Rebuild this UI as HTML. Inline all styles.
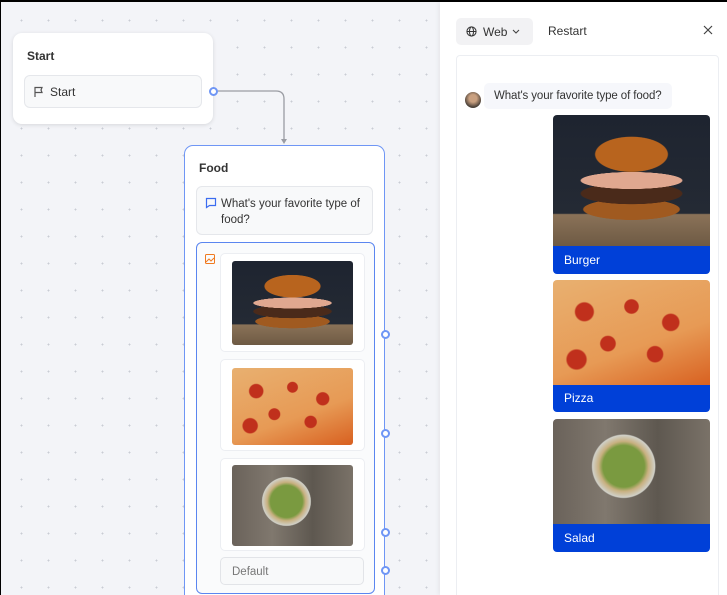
<!DOCTYPE html>
<html><head><style>
*{box-sizing:border-box;margin:0;padding:0}
html,body{width:727px;height:595px;overflow:hidden}
body{position:relative;font-family:"Liberation Sans",sans-serif;background:#f3f4f8;color:#222}
.canvas{position:absolute;left:0;top:0;width:440px;height:595px;background-color:#f3f4f8;background-image:radial-gradient(circle,#c9ccd4 0.8px,transparent 1px);background-size:27px 27px;background-position:8px 7px}
.abs{position:absolute}
.node{position:absolute;background:#fff;border-radius:9px}
.burger{background:radial-gradient(ellipse 38% 22% at 50% 30%,#b8641e 60%,transparent 62%),radial-gradient(ellipse 40% 8% at 50% 50%,#e0a890 80%,transparent 82%),radial-gradient(ellipse 40% 10% at 50% 60%,#4a2a1a 80%,transparent 82%),radial-gradient(ellipse 38% 10% at 50% 72%,#a05a20 80%,transparent 82%),linear-gradient(#1e2430 0%,#242a34 75%,#8a7258 76%,#6e5a44 100%)}
.pizza{background:radial-gradient(circle at 20% 30%,#c0301c 6%,transparent 7%),radial-gradient(circle at 50% 25%,#c0301c 6%,transparent 7%),radial-gradient(circle at 75% 40%,#c0301c 6%,transparent 7%),radial-gradient(circle at 35% 60%,#c0301c 6%,transparent 7%),radial-gradient(circle at 65% 70%,#c0301c 6%,transparent 7%),radial-gradient(circle at 15% 75%,#c0301c 6%,transparent 7%),linear-gradient(160deg,#e8b070,#e79a55 60%,#d86020)}
.salad{background:radial-gradient(circle at 45% 45%,#7a9a40 20%,#c8b080 24%,#d0d0c8 30%,transparent 31%),linear-gradient(90deg,#6a625a,#80786e,#5e5850,#7a7268)}
.card{position:absolute;background:#fff;border:1px solid #eceef2;border-radius:5px}
.handle{position:absolute;width:9px;height:9px;border-radius:50%;border:2px solid #6f96f5;background:#fff}
.lbl{position:absolute;background:#0040d8;color:#fff;font-size:12px;padding-left:11px;line-height:28px;border-radius:0 0 4px 4px}
</style></head><body>
<div class="canvas"></div>
<div class="abs" style="left:0;top:0;width:727px;height:2px;background:#000"></div>
<div class="abs" style="left:0;top:0;width:1px;height:595px;background:#000"></div>

<div class="node" style="left:13px;top:33px;width:200px;height:91px;box-shadow:0 1px 4px rgba(0,0,0,.12)">
 <div class="abs" style="left:14px;top:16px;font-size:12px;font-weight:bold;color:#333">Start</div>
 <div class="abs" style="left:11px;top:42px;width:178px;height:33px;border:1px solid #e5e7eb;border-radius:6px;background:#f8f9fa">
  <svg class="abs" style="left:8px;top:10px" width="12" height="12" viewBox="0 0 12 12" fill="none" stroke="#555" stroke-width="1.2"><path d="M2 11V1.5h7L8 4l1 2.5H2"/></svg>
  <div class="abs" style="left:25px;top:9px;font-size:12px;color:#333">Start</div>
 </div>
</div>
<div class="handle" style="left:209px;top:87px"></div>
<svg class="abs" style="left:218px;top:88px" width="75" height="60" fill="none"><path d="M0 3H58q8 0 8 8V52" stroke="#9a9ca3" stroke-width="1.3"/><path d="M63 51l3 5 3-5z" fill="#9a9ca3"/></svg>

<div class="node" style="left:184px;top:145px;width:201px;height:460px;border:1px solid #6f96f5">
 <div class="abs" style="left:14px;top:15px;font-size:12px;font-weight:bold;color:#333">Food</div>
 <div class="abs" style="left:11px;top:40px;width:177px;height:49px;border:1px solid #e5e7eb;border-radius:6px;background:#f8f9fa">
  <svg class="abs" style="left:8px;top:10px" width="12" height="12" viewBox="0 0 12 12" fill="none" stroke="#3b6cf0" stroke-width="1.2"><path d="M1.5 1.5h9v7h-6l-3 2z"/></svg>
  <div class="abs" style="left:24px;top:9px;font-size:11.5px;color:#333;line-height:16px;width:150px">What's your favorite type of food?</div>
 </div>
 <div class="abs" style="left:11px;top:96px;width:179px;height:352px;border:1.5px solid #5b86f0;border-radius:6px;background:#fafbfc">
  <svg class="abs" style="left:8px;top:11px" width="10" height="10" viewBox="0 0 10 10" fill="none" stroke="#f07a20" stroke-width="1"><rect x="0.5" y="0.5" width="9" height="9" rx="1"/><path d="M1 8l3-3 2 2 3-3"/></svg>
  <div class="card" style="left:23px;top:10px;width:145px;height:99px"><div class="abs burger" style="left:11px;top:7px;width:121px;height:84px;border-radius:3px"></div></div>
  <div class="card" style="left:23px;top:116px;width:145px;height:92px"><div class="abs pizza" style="left:11px;top:8px;width:121px;height:77px;border-radius:3px"></div></div>
  <div class="card" style="left:23px;top:215px;width:145px;height:93px"><div class="abs salad" style="left:11px;top:6px;width:121px;height:81px;border-radius:3px"></div></div>
  <div class="abs" style="left:23px;top:314px;width:144px;height:28px;border:1px solid #e2e4e8;border-radius:5px;background:#f8f9fa;font-size:11.5px;color:#777;padding:8px 0 0 11px">Default</div>
 </div>
</div>
<div class="handle" style="left:381px;top:330px"></div>
<div class="handle" style="left:381px;top:429px"></div>
<div class="handle" style="left:381px;top:528px"></div>
<div class="handle" style="left:381px;top:566px"></div>

<div class="abs" style="left:440px;top:2px;width:287px;height:593px;background:#fff;box-shadow:-2px 0 4px rgba(0,0,0,.05);overflow:hidden">
 <div class="abs" style="left:16px;top:16px;width:77px;height:27px;background:#f2f2f4;border-radius:5px">
  <svg class="abs" style="left:10px;top:8px" width="11" height="11" viewBox="0 0 12 12" fill="none" stroke="#333" stroke-width="1.1"><circle cx="6" cy="6" r="5"/><ellipse cx="6" cy="6" rx="2.2" ry="5"/><path d="M1 6h10"/></svg>
  <div class="abs" style="left:27px;top:7px;font-size:12px;color:#333">Web</div>
  <svg class="abs" style="left:56px;top:11px" width="8" height="6" fill="none" stroke="#444" stroke-width="1.1"><path d="M1 1l3 3 3-3"/></svg>
 </div>
 <div class="abs" style="left:108px;top:22px;font-size:12px;color:#333">Restart</div>
 <svg class="abs" style="left:263px;top:23px" width="10" height="10" stroke="#444" stroke-width="1.2"><path d="M1 1l8 8M9 1l-8 8"/></svg>
 <div class="abs" style="left:16px;top:53px;width:263px;height:560px;border:1px solid #eceef2;border-radius:4px">
  <div class="abs" style="left:8px;top:36px;width:16px;height:16px;border-radius:50%;background:radial-gradient(circle at 50% 40%,#c9a080 30%,#4a4038 70%)"></div>
  <div class="abs" style="left:27px;top:27px;width:188px;height:26px;background:#f6f7fb;border-radius:5px;font-size:11.5px;color:#333;padding:7px 0 0 10px;white-space:nowrap;letter-spacing:-0.1px">What's your favorite type of food?</div>
  <div class="abs burger" style="left:96px;top:59px;width:157px;height:131px;border-radius:4px 4px 0 0"></div>
  <div class="lbl" style="left:96px;top:190px;width:157px">Burger</div>
  <div class="abs pizza" style="left:96px;top:224px;width:157px;height:106px;border-radius:4px 4px 0 0"></div>
  <div class="lbl" style="left:96px;top:329px;width:157px;height:27px;line-height:27px">Pizza</div>
  <div class="abs salad" style="left:96px;top:363px;width:157px;height:105px;border-radius:4px 4px 0 0"></div>
  <div class="lbl" style="left:96px;top:468px;width:157px">Salad</div>
 </div>
</div>
</body></html>
